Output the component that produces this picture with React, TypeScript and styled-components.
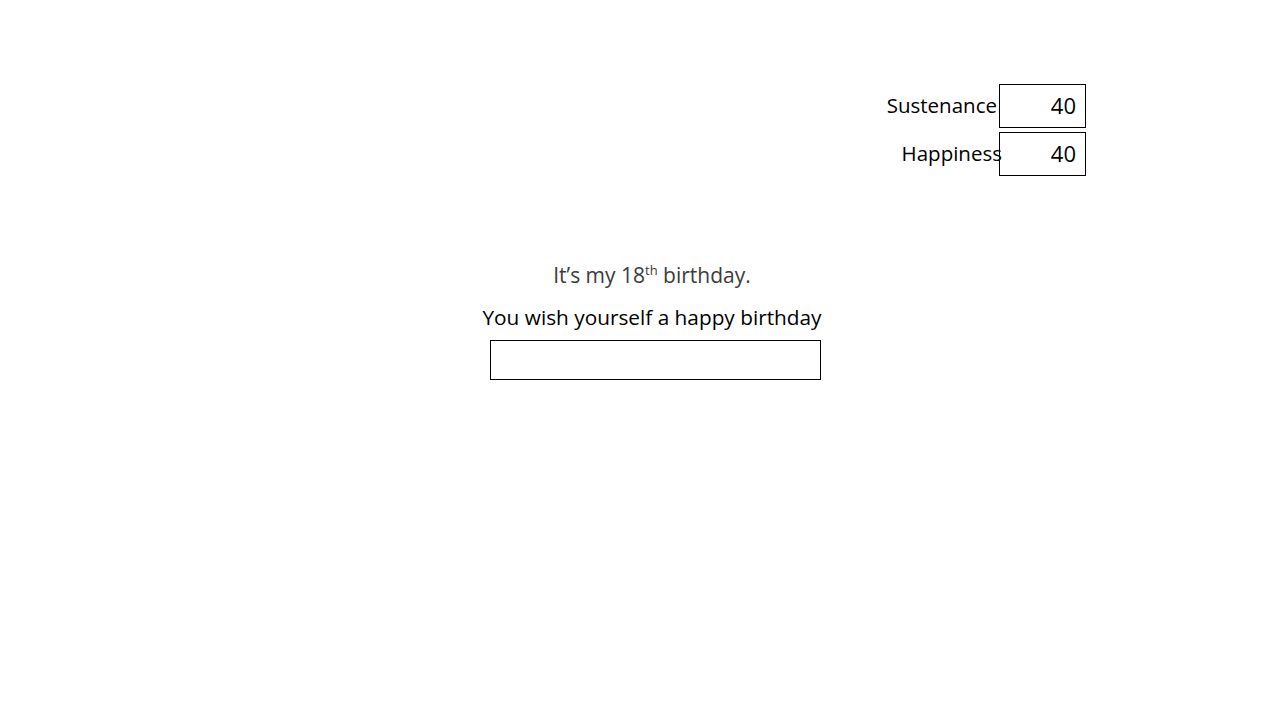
import styled, { createGlobalStyle } from "styled-components";

const GlobalStyle = createGlobalStyle`
    html, body {
        margin: 0;
        padding: 0;
        background: #ffffff;
    }
    body {
        font-family: "Open Sans", "Noto Sans", sans-serif;
        color: #000000;
    }
`;

const Page = styled.div`
    width: 1280px;
    height: 720px;
    display: flex;
    flex-direction: column;
`;

const StatsBar = styled.div`
    display: flex;
    justify-content: flex-end;
    padding: 84px 194px 0 0;
`;

const Stats = styled.div`
    display: flex;
    flex-direction: column;
    align-items: flex-end;
    gap: 4px;
`;

const StatRow = styled.div`
    display: flex;
    align-items: center;
    justify-content: flex-end;
`;

const StatLabel = styled.span<{ $overlap: number }>`
    font-size: 20.5px;
    margin: -2px ${(p) => -p.$overlap}px 0 0;
    position: relative;
    z-index: 1;
`;

const StatBox = styled.div`
    width: 85px;
    height: 42px;
    border: 1px solid #000;
    display: flex;
    align-items: center;
    justify-content: flex-end;
    font-size: 22px;
    margin-left: 2px;
`;

const StatValue = styled.span`
    margin: -2px 9px 0 0;
`;

const Story = styled.div`
    display: flex;
    flex-direction: column;
    align-items: center;
    padding: 85px 0 0 24px;
`;

const Intro = styled.p`
    margin: 0;
    font-size: 21px;
    color: #3c3c3c;
    sup {
        font-size: 13px;
        vertical-align: 8px;
        line-height: 0;
    }
`;

const Prompt = styled.p`
    margin: 14px 0 0;
    font-size: 20.8px;
    color: #000;
`;

const Answer = styled.input`
    margin: 9px 0 0 7px;
    width: 331px;
    height: 40px;
    border: 1px solid #000;
    padding: 0;
    box-sizing: border-box;
    font-family: inherit;
    font-size: 18px;
    outline: none;
`;

export default function App() {
    return (
        <Page>
            <GlobalStyle />
            <StatsBar>
                <Stats>
                    <StatRow>
                        <StatLabel $overlap={0}>Sustenance</StatLabel>
                        <StatBox><StatValue>40</StatValue></StatBox>
                    </StatRow>
                    <StatRow>
                        <StatLabel $overlap={5}>Happiness</StatLabel>
                        <StatBox><StatValue>40</StatValue></StatBox>
                    </StatRow>
                </Stats>
            </StatsBar>
            <Story>
                <Intro>It’s my 18<sup>th</sup> birthday.</Intro>
                <Prompt>You wish yourself a happy birthday</Prompt>
                <Answer type="text" />
            </Story>
        </Page>
    );
}
